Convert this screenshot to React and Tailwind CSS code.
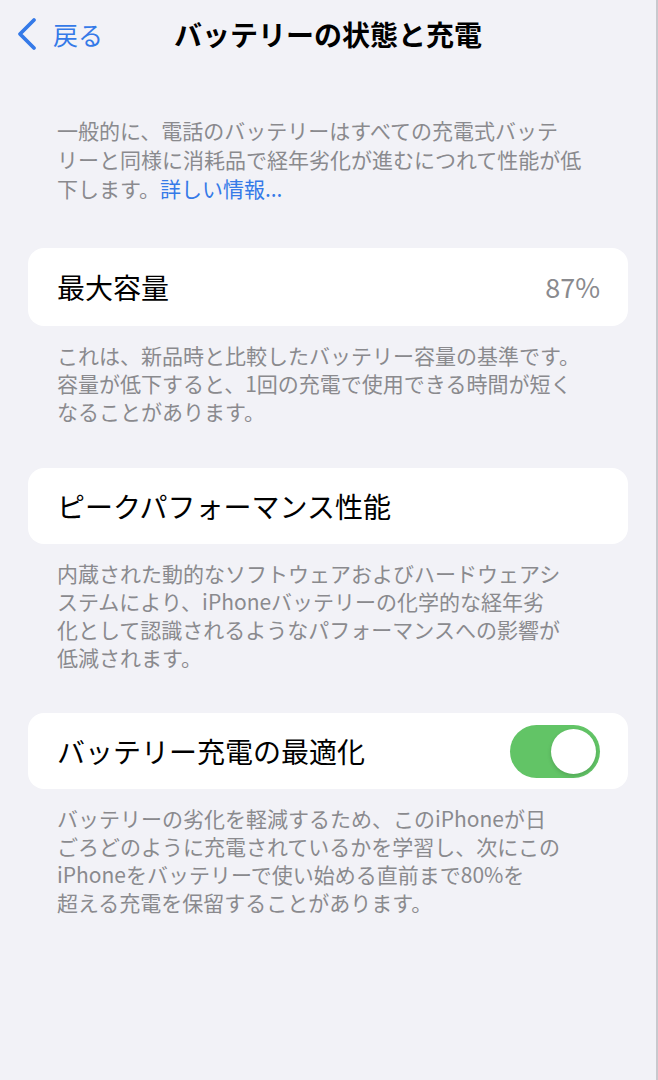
import React, { useState } from "react";

const FONT = { fontFamily: '"Noto Sans CJK JP", "Noto Sans", sans-serif' };

function Note({ lines, className = "" }) {
  return (
    <div className={`px-[57px] text-[21px] leading-[28px] text-[#8a8a8e] ${className}`}>
      {lines.map((l, i) => (
        <div key={i} className="whitespace-nowrap">{l}</div>
      ))}
    </div>
  );
}

function Card({ children, h, className = "" }) {
  return (
    <div className={`mx-[28px] flex items-center justify-between rounded-[16px] bg-white pl-[29px] pr-[28px] ${h} ${className}`}>
      {children}
    </div>
  );
}

function Toggle({ on, onChange }) {
  return (
    <button
      onClick={() => onChange(!on)}
      className={`flex h-[53px] w-[90px] items-center rounded-full p-[4px] ${on ? "justify-end bg-[#62c466]" : "justify-start bg-[#e5e5ea]"}`}
    >
      <span className="block h-[45px] w-[45px] rounded-full bg-white shadow-[0_2px_4px_rgba(0,0,0,0.15)]" />
    </button>
  );
}

export default function App() {
  const [optimized, setOptimized] = useState(true);

  return (
    <div style={FONT} className="min-h-[1080px] w-full border-r-2 border-[#c9c9ce] bg-[#f2f2f7] pb-10">
      <header className="grid h-[72px] grid-cols-[1fr_auto_1fr] items-center pb-[4px]">
        <button className="flex items-center gap-[15px] pl-[16px] text-[#357ae8]">
          <svg width="22" height="34" viewBox="0 0 22 34" fill="none">
            <path d="M18 3 L4 17 L18 31" stroke="currentColor" strokeWidth="3.8" strokeLinecap="round" strokeLinejoin="round" />
          </svg>
          <span className="text-[25px] leading-none">戻る</span>
        </button>
        <h1 className="text-[28px] font-bold leading-none text-black">バッテリーの状態と充電</h1>
        <div />
      </header>

      <div className="mt-[44px] px-[57px] text-[21px] leading-[29px] text-[#8a8a8e]">
        <div className="whitespace-nowrap">一般的に、電話のバッテリーはすべての充電式バッテ</div>
        <div className="whitespace-nowrap">リーと同様に消耗品で経年劣化が進むにつれて性能が低</div>
        <div className="whitespace-nowrap">
          下します。<span className="text-[#357ae8]">詳しい情報...</span>
        </div>
      </div>

      <Card h="h-[78px]" className="mt-[45px]">
        <span className="text-[28px] text-black">最大容量</span>
        <span className="text-[27px] text-[#8a8a8e]">87%</span>
      </Card>
      <Note
        className="mt-[15px]"
        lines={[
          "これは、新品時と比較したバッテリー容量の基準です。",
          "容量が低下すると、1回の充電で使用できる時間が短く",
          "なることがあります。",
        ]}
      />

      <Card h="h-[76px]" className="mt-[43px]">
        <span className="text-[28px] text-black">ピークパフォーマンス性能</span>
      </Card>
      <Note
        className="mt-[15px]"
        lines={[
          "内蔵された動的なソフトウェアおよびハードウェアシ",
          "ステムにより、iPhoneバッテリーの化学的な経年劣",
          "化として認識されるようなパフォーマンスへの影響が",
          "低減されます。",
        ]}
      />

      <Card h="h-[76px]" className="mt-[42px]">
        <span className="text-[28px] text-black">バッテリー充電の最適化</span>
        <Toggle on={optimized} onChange={setOptimized} />
      </Card>
      <Note
        className="mt-[15px]"
        lines={[
          "バッテリーの劣化を軽減するため、このiPhoneが日",
          "ごろどのように充電されているかを学習し、次にこの",
          "iPhoneをバッテリーで使い始める直前まで80%を",
          "超える充電を保留することがあります。",
        ]}
      />
    </div>
  );
}
